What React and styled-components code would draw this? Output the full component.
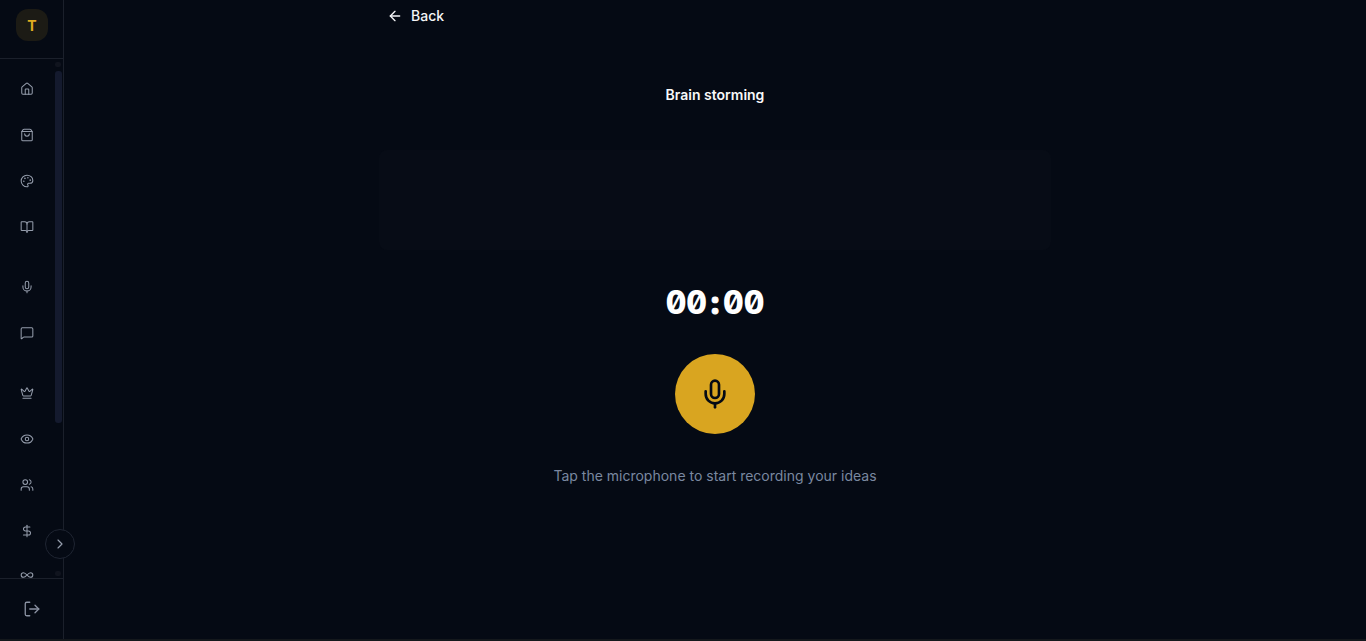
import styled, { createGlobalStyle } from "styled-components";
import {
  ArrowLeft,
  BookOpen,
  ChevronRight,
  Crown,
  DollarSign,
  Eye,
  House,
  Infinity as InfinityIcon,
  LogOut,
  MessageSquare,
  Mic,
  Palette,
  ShoppingBag,
  Users,
} from "lucide-react";

const GlobalStyle = createGlobalStyle`
  html, body {
    margin: 0;
    height: 100%;
    background: #050a14;
    overflow: hidden;
  }
  * {
    box-sizing: border-box;
  }
`;

const Shell = styled.div`
  display: flex;
  height: 641px;
  font-family: Inter, "Liberation Sans", sans-serif;
  color: #ffffff;
  background: #050a14;
  border-bottom: 2px solid #14181c;
`;

const Sidebar = styled.aside`
  position: relative;
  flex: 0 0 64px;
  display: flex;
  flex-direction: column;
  border-right: 1px solid #1b202b;
`;

const LogoBar = styled.div`
  flex: 0 0 59px;
  padding: 9px 0 0 16px;
  border-bottom: 1px solid #1b202b;
`;

const Logo = styled.div`
  width: 32px;
  height: 32px;
  border-radius: 12px;
  background: #1c1b15;
  color: #e0ab20;
  font-size: 14px;
  font-weight: 700;
  display: flex;
  align-items: center;
  justify-content: center;
`;

const NavScroll = styled.nav`
  flex: 1;
  min-height: 0;
  overflow: hidden;
  padding-top: 7px;
`;

/* drawn by hand: the headless browser hides native scrollbars */
const ScrollThumb = styled.div`
  position: absolute;
  top: 71px;
  left: 55px;
  width: 7px;
  height: 352px;
  border-radius: 3px;
  background: #141a2e;
`;

const ScrollArrow = styled.div`
  position: absolute;
  top: ${(props) => props.$top}px;
  left: 55px;
  width: 6px;
  height: 5px;
  border-radius: 2px;
  background: #10141e;
`;

const NavGroup = styled.div`
  margin-bottom: ${(props) => props.$gap}px;
`;

const NavItem = styled.a`
  display: flex;
  align-items: center;
  justify-content: center;
  width: 54px;
  height: 46px;
  color: #959dac;
`;

const SidebarFooter = styled.div`
  flex: 0 0 61px;
  display: flex;
  align-items: center;
  justify-content: center;
  border-top: 1px solid #1b202b;
  color: #8b93a3;
`;

const CollapseButton = styled.button`
  position: absolute;
  top: 529px;
  left: 45px;
  width: 30px;
  height: 30px;
  padding: 0;
  border-radius: 50%;
  border: 1px solid #1f2532;
  background: #050a14;
  color: #959dac;
  display: flex;
  align-items: center;
  justify-content: center;
`;

const Main = styled.main`
  flex: 1;
  min-width: 0;
  display: flex;
  justify-content: center;
`;

const Column = styled.div`
  width: 672px;
  display: flex;
  flex-direction: column;
  align-items: center;
`;

const BackLink = styled.a`
  align-self: flex-start;
  display: flex;
  align-items: center;
  gap: 8px;
  height: 31px;
  padding: 0 8px;
  color: #f4f5f7;
  font-size: 14px;
  font-weight: 500;
`;

const Title = styled.h1`
  margin: 54px 0 0;
  font-size: 14px;
  line-height: 20px;
  font-weight: 600;
  color: #f8f9fa;
`;

const TranscriptBox = styled.div`
  width: 100%;
  height: 100px;
  margin-top: 45px;
  border-radius: 8px;
  background: #070c16;
`;

const Timer = styled.div`
  margin-top: 33px;
  font-size: 32px;
  line-height: 40px;
  font-weight: 800;
  font-feature-settings: "zero", "tnum";
  color: #ffffff;
`;

const TimerColon = styled.span`
  display: inline-block;
  width: 16px;
  text-align: center;
  -webkit-text-stroke: 1px #ffffff;
`;

const RecordButton = styled.button`
  width: 80px;
  height: 80px;
  margin-top: 31px;
  padding: 0;
  border: 0;
  border-radius: 50%;
  background: #d9a520;
  color: #050a14;
  display: flex;
  align-items: center;
  justify-content: center;
`;

const Hint = styled.p`
  margin: 32px 0 0;
  font-size: 14px;
  line-height: 20px;
  color: #7a88a0;
`;

const navGroups = [
  { gap: 14, icons: [House, ShoppingBag, Palette, BookOpen] },
  { gap: 14, icons: [Mic, MessageSquare] },
  { gap: -2, icons: [Crown, Eye, Users, DollarSign] },
  { gap: 0, icons: [InfinityIcon] },
];

const App = () => {
  return (
    <>
      <GlobalStyle />
      <Shell>
        <Sidebar>
          <LogoBar>
            <Logo>T</Logo>
          </LogoBar>
          <NavScroll>
            {navGroups.map((group, i) => (
              <NavGroup key={i} $gap={group.gap}>
                {group.icons.map((Icon, j) => (
                  <NavItem key={j}>
                    <Icon size={14} strokeWidth={1.75} />
                  </NavItem>
                ))}
              </NavGroup>
            ))}
          </NavScroll>
          <SidebarFooter>
            <LogOut size={18} strokeWidth={1.75} />
          </SidebarFooter>
          <ScrollArrow $top={62} />
          <ScrollThumb />
          <ScrollArrow $top={571} />
          <CollapseButton>
            <ChevronRight size={16} strokeWidth={1.75} />
          </CollapseButton>
        </Sidebar>
        <Main>
          <Column>
            <BackLink>
              <ArrowLeft size={16} strokeWidth={2} />
              Back
            </BackLink>
            <Title>Brain storming</Title>
            <TranscriptBox />
            <Timer>
              00<TimerColon>:</TimerColon>00
            </Timer>
            <RecordButton>
              <Mic size={32} strokeWidth={2} />
            </RecordButton>
            <Hint>Tap the microphone to start recording your ideas</Hint>
          </Column>
        </Main>
      </Shell>
    </>
  );
};

export default App;
